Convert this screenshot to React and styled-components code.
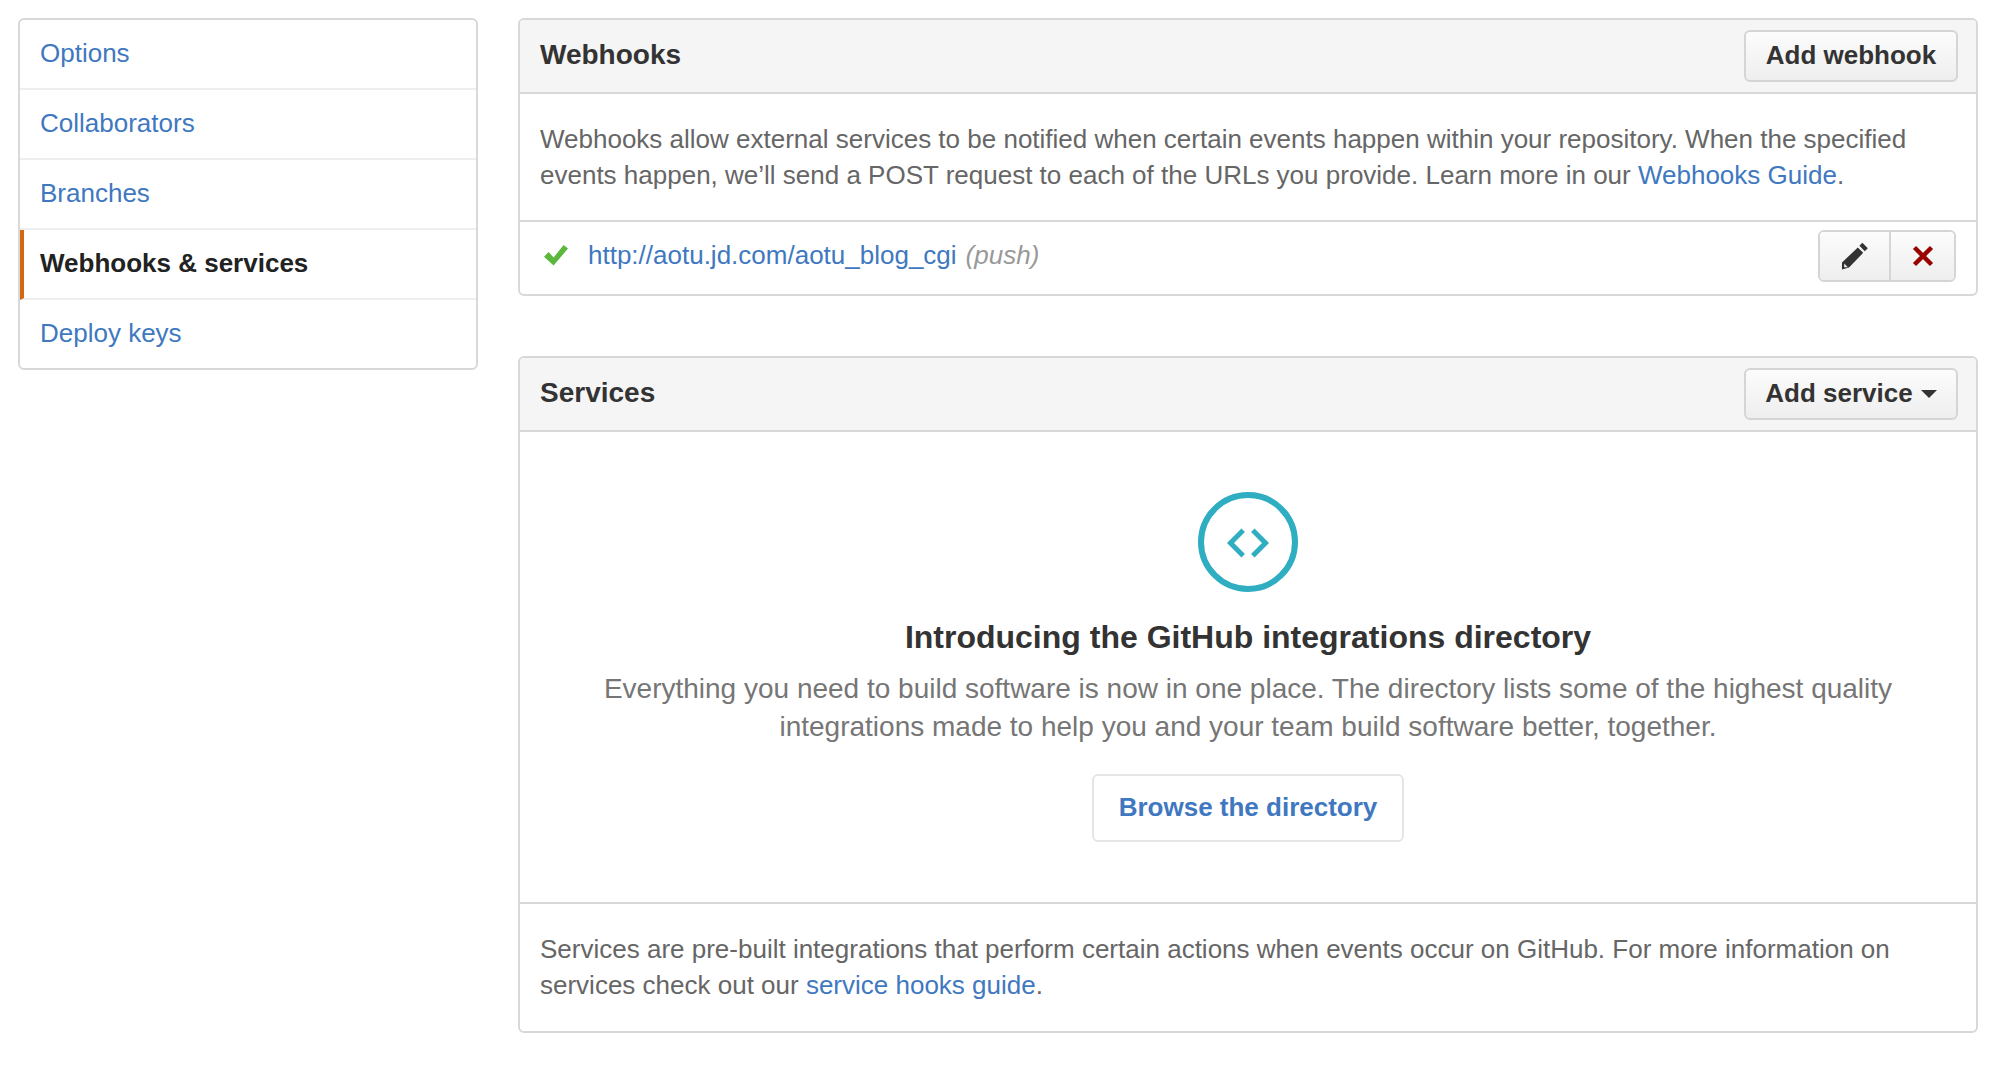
import React from "react";
import styled, { createGlobalStyle } from "styled-components";

const GlobalStyle = createGlobalStyle`
    html, body {
        margin: 0;
        padding: 0;
        background: #fff;
    }
    body {
        font-family: "Liberation Sans", Arial, sans-serif;
        font-size: 26px;
        line-height: 36px;
        color: #333;
    }
    * {
        box-sizing: border-box;
    }
`;

const menuItems = ["Options", "Collaborators", "Branches", "Webhooks & services", "Deploy keys"];

const App = () => {
    return (
        <Page>
            <GlobalStyle />
            <Sidebar aria-label="Settings">
                {menuItems.map((item) => (
                    <MenuItem key={item} $selected={item === "Webhooks & services"}>
                        {item}
                    </MenuItem>
                ))}
            </Sidebar>
            <Content>
                <Panel>
                    <PanelHeader>
                        <PanelTitle>Webhooks</PanelTitle>
                        <Button>Add webhook</Button>
                    </PanelHeader>
                    <Intro>
                        Webhooks allow external services to be notified when certain events happen within your repository. When the specified
                        events happen, we’ll send a POST request to each of the URLs you provide. Learn more in our{" "}
                        <Link>Webhooks Guide</Link>.
                    </Intro>
                    <HookRow>
                        <svg width="24" height="21" viewBox="0 0 24 21" aria-hidden="true">
                            <path d="M0 11.8L4.6 7l5 5.5L19.6 0 24 3.5 9.6 20.6z" fill="#5cb83c" />
                        </svg>
                        <HookLink>http://aotu.jd.com/aotu_blog_cgi</HookLink>
                        <HookEvent>(push)</HookEvent>
                        <ButtonGroup>
                            <GroupButton aria-label="Edit" $wide>
                                <svg width="28" height="28" viewBox="0 0 28 28" aria-hidden="true">
                                    <path d="M21.4 0.8l5.4 5.4-3 3-5.4-5.4z" fill="#333" />
                                    <path fillRule="evenodd" d="M16.8 5.4l5.4 5.4L8 25.6 1 27.6l0-7zM3.2 21.6v3.6h3.6z" fill="#333" />
                                </svg>
                            </GroupButton>
                            <GroupButton aria-label="Delete">
                                <svg width="22" height="22" viewBox="0 0 22 22" aria-hidden="true">
                                    <path d="M2.5 2.5l17 17M19.5 2.5l-17 17" stroke="#990000" strokeWidth="4.4" fill="none" />
                                </svg>
                            </GroupButton>
                        </ButtonGroup>
                    </HookRow>
                </Panel>
                <Panel>
                    <PanelHeader>
                        <PanelTitle>Services</PanelTitle>
                        <Button>
                            Add service
                            <Caret />
                        </Button>
                    </PanelHeader>
                    <Promo>
                        <svg width="100" height="100" viewBox="0 0 100 100" aria-hidden="true">
                            <circle cx="50" cy="50" r="47" stroke="#2fadc1" strokeWidth="6" fill="none" />
                            <path d="M45.2 38.3L32.5 51l12.7 12.7M54.8 38.3L67.5 51 54.8 63.7" stroke="#2fadc1" strokeWidth="5" fill="none" />
                        </svg>
                        <PromoTitle>Introducing the GitHub integrations directory</PromoTitle>
                        <PromoText>
                            Everything you need to build software is now in one place. The directory lists some of the highest quality
                            <br />
                            integrations made to help you and your team build software better, together.
                        </PromoText>
                        <BrowseButton>Browse the directory</BrowseButton>
                    </Promo>
                    <Footer>
                        Services are pre-built integrations that perform certain actions when events occur on GitHub. For more information on
                        services check out our <Link>service hooks guide</Link>.
                    </Footer>
                </Panel>
            </Content>
        </Page>
    );
};

const Page = styled.div`
    display: flex;
    align-items: flex-start;
    gap: 40px;
    padding: 18px 28px 0 18px;
    min-height: 1076px;
`;

const Sidebar = styled.nav`
    flex: 0 0 460px;
    border: 2px solid #d8d8d8;
    border-radius: 6px;
    overflow: hidden;
`;

const MenuItem = styled.div`
    height: 70px;
    padding-left: ${(p) => (p.$selected ? "16px" : "20px")};
    padding-bottom: 2px;
    display: flex;
    align-items: center;
    border-left: ${(p) => (p.$selected ? "4px solid #d26911" : "none")};
    border-bottom: 2px solid #eee;
    color: ${(p) => (p.$selected ? "#222" : "#4078c0")};
    font-weight: ${(p) => (p.$selected ? "bold" : "normal")};

    &:last-child {
        height: 68px;
        border-bottom: none;
    }
`;

const Content = styled.main`
    flex: 1;
    display: flex;
    flex-direction: column;
    gap: 60px;
`;

const Panel = styled.section`
    border: 2px solid #d8d8d8;
    border-radius: 6px;
    overflow: hidden;
`;

const PanelHeader = styled.header`
    height: 74px;
    padding: 10px 18px 10px 20px;
    display: flex;
    align-items: center;
    justify-content: space-between;
    background: #f5f5f5;
    border-bottom: 2px solid #d8d8d8;
`;

const PanelTitle = styled.h3`
    margin: -2px 0 0;
    font-size: 28px;
    line-height: 36px;
    font-weight: bold;
    color: #333;
`;

const Button = styled.button`
    width: 214px;
    height: 52px;
    padding: 0 0 2px;
    display: flex;
    align-items: center;
    justify-content: center;
    border: 2px solid #d5d5d5;
    border-radius: 6px;
    background: linear-gradient(#fcfcfc, #eee);
    font: bold 26px/36px "Liberation Sans", Arial, sans-serif;
    color: #333;
`;

const Caret = styled.span`
    margin-left: 8px;
    margin-top: 2px;
    border-top: 8px solid #333;
    border-left: 8px solid transparent;
    border-right: 8px solid transparent;
`;

const Intro = styled.p`
    margin: 0;
    padding: 27px 20px 0;
    height: 128px;
    color: #666;
    border-bottom: 2px solid #d8d8d8;
`;

const Link = styled.a`
    color: #4078c0;
`;

const HookRow = styled.div`
    height: 72px;
    padding: 0 20px 6px 24px;
    display: flex;
    align-items: center;
`;

const HookLink = styled.a`
    margin-left: 20px;
    color: #4078c0;
`;

const HookEvent = styled.em`
    margin-left: 9px;
    color: #999;
`;

const ButtonGroup = styled.div`
    margin-left: auto;
    margin-top: 2px;
    display: flex;
    height: 52px;
    border: 2px solid #d5d5d5;
    border-radius: 6px;
    overflow: hidden;
`;

const GroupButton = styled.button`
    width: ${(p) => (p.$wide ? "69px" : "65px")};
    padding: 0;
    display: flex;
    align-items: center;
    justify-content: center;
    border: none;
    background: linear-gradient(#fcfcfc, #eee);

    & + & {
        border-left: 2px solid #d5d5d5;
    }
`;

const Promo = styled.div`
    height: 472px;
    padding-top: 60px;
    display: flex;
    flex-direction: column;
    align-items: center;
    border-bottom: 2px solid #d8d8d8;
`;

const PromoTitle = styled.h2`
    margin: 23px 0 0;
    font-size: 32px;
    line-height: 44px;
    font-weight: bold;
    color: #333;
`;

const PromoText = styled.p`
    margin: 11px 0 0;
    font-size: 28px;
    line-height: 38px;
    text-align: center;
    color: #767676;
`;

const BrowseButton = styled.button`
    width: 312px;
    height: 68px;
    margin-top: 28px;
    padding: 0 0 2px;
    border: 2px solid #e5e5e5;
    border-radius: 6px;
    background: #fff;
    font: bold 26px/36px "Liberation Sans", Arial, sans-serif;
    color: #4078c0;
`;

const Footer = styled.p`
    margin: 0;
    padding: 27px 20px 28px;
    color: #666;
`;

export default App;
